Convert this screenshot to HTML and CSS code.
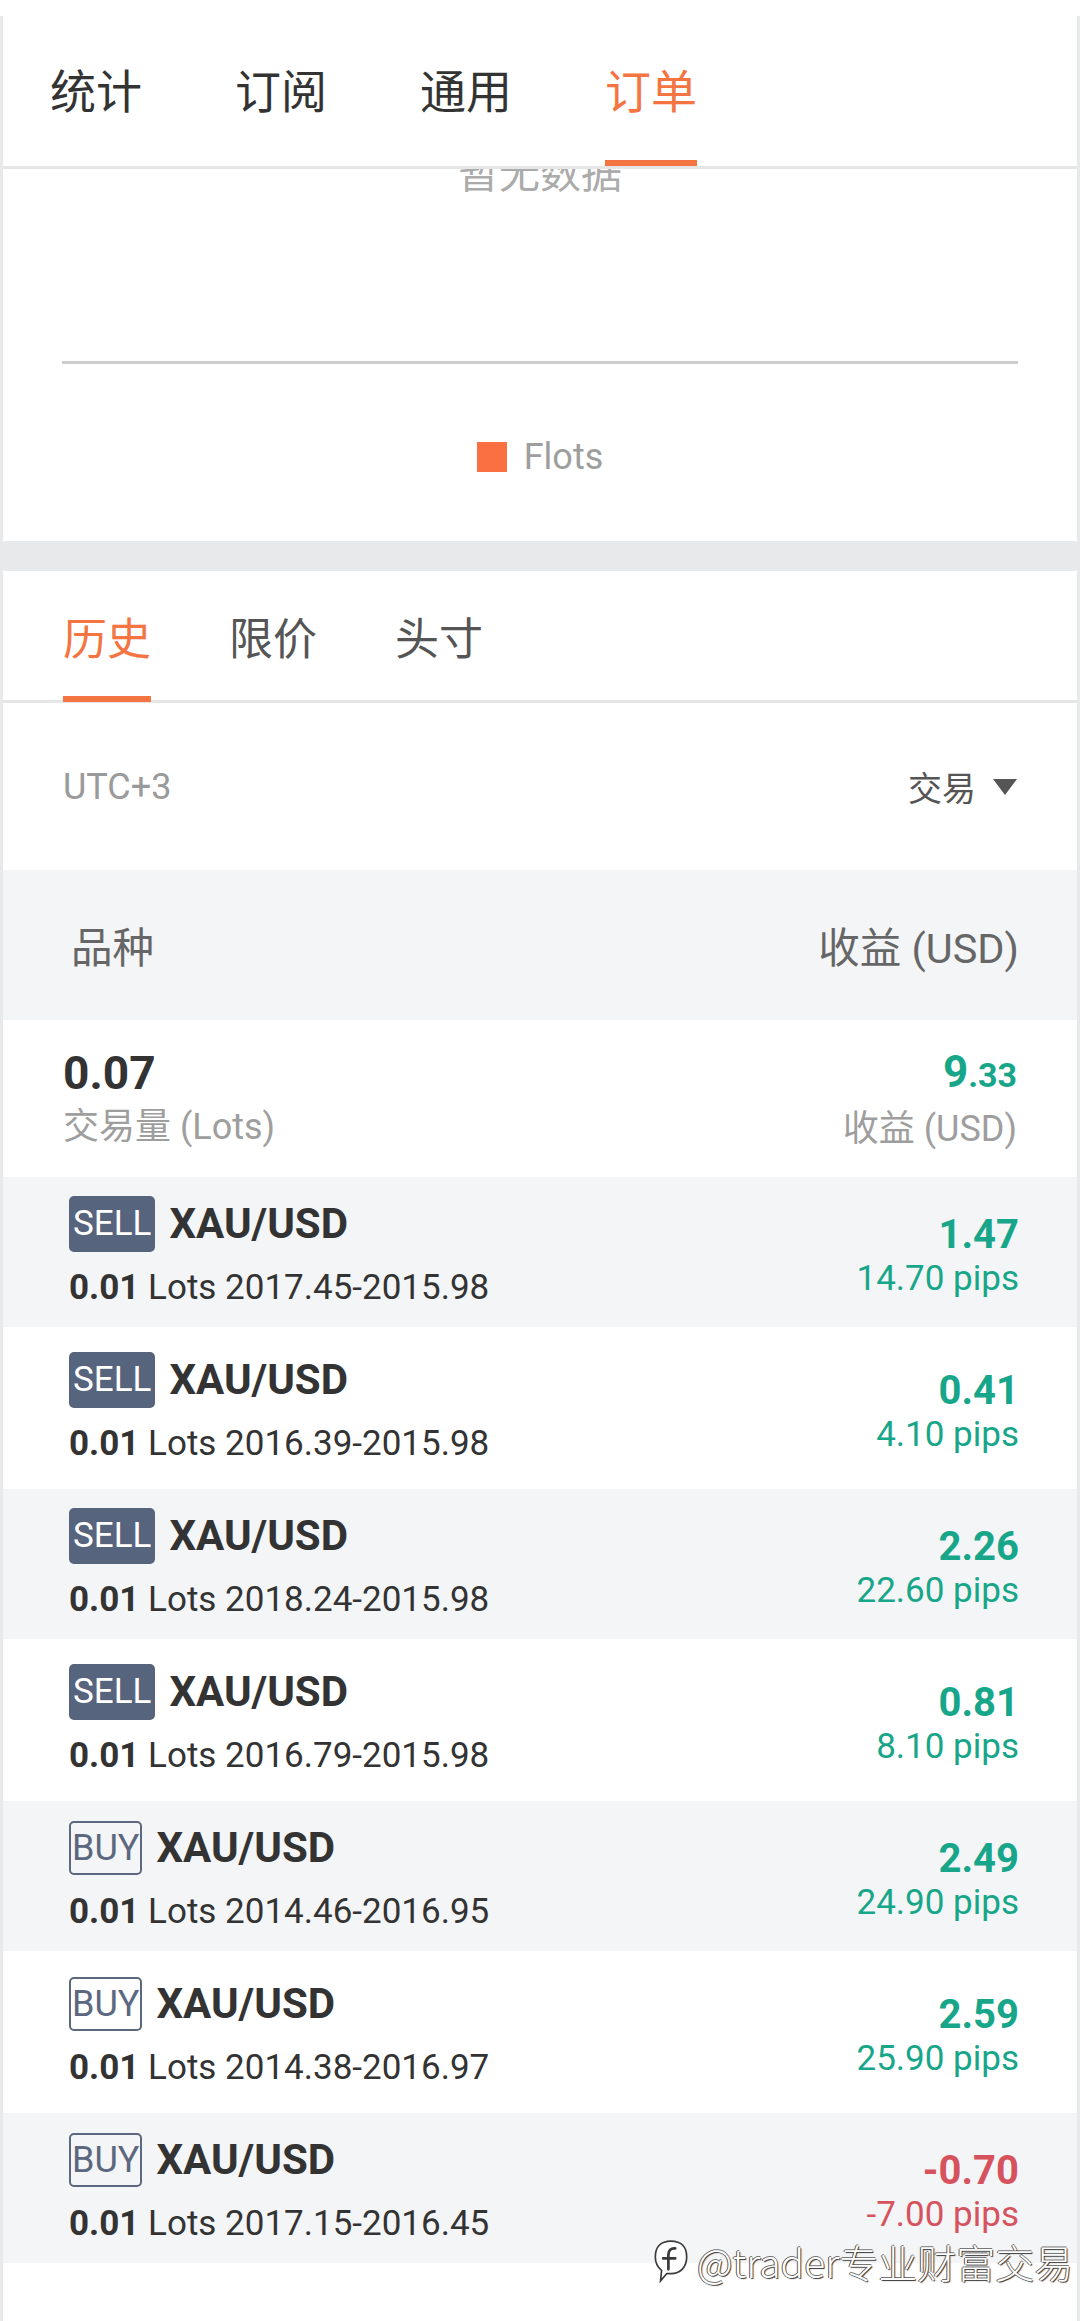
FILE: index.html
```html
<!DOCTYPE html>
<html lang="zh">
<head>
<meta charset="utf-8">
<title>订单</title>
<link rel="stylesheet" href="styles.css">
</head>
<body>
<div class="app">
  <div class="top-gap"></div>
  <div class="frame">
    <section class="card chart-card">
      <nav class="tabs main-tabs">
        <span class="tab">统计</span>
        <span class="tab">订阅</span>
        <span class="tab">通用</span>
        <span class="tab active">订单</span>
      </nav>
      <div class="chart">
        <div class="empty">暂无数据</div>
        <div class="axis"></div>
        <div class="legend"><span class="swatch"></span><span class="legend-label">Flots</span></div>
      </div>
    </section>

    <section class="card orders">
      <nav class="tabs sub-tabs">
        <span class="tab active">历史</span>
        <span class="tab">限价</span>
        <span class="tab">头寸</span>
      </nav>
      <div class="filter">
        <span class="tz">UTC+3</span>
        <span class="select">交易<i class="caret"></i></span>
      </div>
      <div class="head-row">
        <span>品种</span>
        <span>收益 (USD)</span>
      </div>
      <div class="summary">
        <div class="sum-left">
          <div class="big">0.07</div>
          <div class="label">交易量 (Lots)</div>
        </div>
        <div class="sum-right">
          <div class="pnl">9<small>.33</small></div>
          <div class="label">收益 (USD)</div>
        </div>
      </div>
      <ul class="trades">
        <li class="trade">
          <div class="t-left">
            <div class="t-top"><span class="badge sell">SELL</span><span class="sym">XAU/USD</span></div>
            <div class="t-bot"><b>0.01</b> Lots 2017.45-2015.98</div>
          </div>
          <div class="t-right up"><div class="pl">1.47</div><div class="pips">14.70 pips</div></div>
        </li>
        <li class="trade">
          <div class="t-left">
            <div class="t-top"><span class="badge sell">SELL</span><span class="sym">XAU/USD</span></div>
            <div class="t-bot"><b>0.01</b> Lots 2016.39-2015.98</div>
          </div>
          <div class="t-right up"><div class="pl">0.41</div><div class="pips">4.10 pips</div></div>
        </li>
        <li class="trade">
          <div class="t-left">
            <div class="t-top"><span class="badge sell">SELL</span><span class="sym">XAU/USD</span></div>
            <div class="t-bot"><b>0.01</b> Lots 2018.24-2015.98</div>
          </div>
          <div class="t-right up"><div class="pl">2.26</div><div class="pips">22.60 pips</div></div>
        </li>
        <li class="trade">
          <div class="t-left">
            <div class="t-top"><span class="badge sell">SELL</span><span class="sym">XAU/USD</span></div>
            <div class="t-bot"><b>0.01</b> Lots 2016.79-2015.98</div>
          </div>
          <div class="t-right up"><div class="pl">0.81</div><div class="pips">8.10 pips</div></div>
        </li>
        <li class="trade">
          <div class="t-left">
            <div class="t-top"><span class="badge buy">BUY</span><span class="sym">XAU/USD</span></div>
            <div class="t-bot"><b>0.01</b> Lots 2014.46-2016.95</div>
          </div>
          <div class="t-right up"><div class="pl">2.49</div><div class="pips">24.90 pips</div></div>
        </li>
        <li class="trade">
          <div class="t-left">
            <div class="t-top"><span class="badge buy">BUY</span><span class="sym">XAU/USD</span></div>
            <div class="t-bot"><b>0.01</b> Lots 2014.38-2016.97</div>
          </div>
          <div class="t-right up"><div class="pl">2.59</div><div class="pips">25.90 pips</div></div>
        </li>
        <li class="trade">
          <div class="t-left">
            <div class="t-top"><span class="badge buy">BUY</span><span class="sym">XAU/USD</span></div>
            <div class="t-bot"><b>0.01</b> Lots 2017.15-2016.45</div>
          </div>
          <div class="t-right down"><div class="pl">-0.70</div><div class="pips">-7.00 pips</div></div>
        </li>
      </ul>
      <div class="foot"></div>
    </section>
  </div>

  <div class="watermark">
    <svg class="wm-logo" width="36" height="46" viewBox="0 0 34 44" aria-hidden="true">
      <path d="M17 3 C27 3 32 9 32 18 C32 28 26 34 17 34 L13 34 L7 41 L8 31 C4 28 2 24 2 18 C2 9 7 3 17 3Z" fill="#fff" stroke="#3a3a3a" stroke-width="1.6"/>
      <path d="M21 10 C17 9.5 14.5 12 14.5 16 L14.5 30 M9.5 19.5 L21 19.5" stroke="#3a3a3a" stroke-width="2.6" fill="none" stroke-linecap="round"/>
    </svg>
    <span class="wm-text">@trader专业财富交易</span>
  </div>
</div>
</body>
</html>
```

FILE: styles.css
```css
* {
  box-sizing: border-box;
  margin: 0;
  padding: 0;
}

html, body {
  background: #fff;
}

body {
  width: 1080px;
  font-family: Roboto, "Noto Sans CJK SC", sans-serif;
  color: #333;
}

.app {
  position: relative;
  width: 1080px;
  min-height: 2321px;
  display: flex;
  flex-direction: column;
}

.top-gap {
  height: 16px;
  background: #fff;
}

.frame {
  flex: 1;
  display: flex;
  flex-direction: column;
  background: #e8e9eb;
  padding: 0 3px;
}

.card {
  background: #fff;
}

/* ---------- tabs ---------- */
.tabs {
  display: flex;
  border-bottom: 3px solid #e6e6e6;
  font-family: "Noto Sans CJK SC", sans-serif;
}

.tab {
  position: relative;
  display: flex;
  align-items: center;
}

.tab.active {
  color: #f47442;
}

.tab.active::after {
  content: "";
  position: absolute;
  left: 0;
  right: 0;
  bottom: 0;
  height: 6px;
  background: #f47442;
}

.main-tabs {
  height: 153px;
  padding-left: 47px;
  gap: 93px;
  font-size: 46px;
  color: #333;
}

.main-tabs .tab {
  padding-bottom: 7px;
}

.sub-tabs {
  height: 132px;
  padding-left: 60px;
  gap: 78px;
  font-size: 44px;
  color: #555;
}

.sub-tabs .tab.active::after {
  bottom: -2px;
}

/* ---------- chart ---------- */
.chart {
  height: 372px;
  overflow: hidden;
  display: flex;
  flex-direction: column;
}

.empty {
  margin-top: -19px;
  font-family: "Noto Sans CJK SC", sans-serif;
  font-size: 41px;
  line-height: 41px;
  text-align: center;
  color: #ababab;
}

.axis {
  margin: 170px 59px 0;
  height: 3px;
  background: #cdcdcd;
}

.legend {
  margin-top: 78px;
  height: 30px;
  display: flex;
  justify-content: center;
  align-items: center;
  gap: 17px;
}

.swatch {
  width: 30px;
  height: 30px;
  background: #fb7043;
}

.legend-label {
  font-size: 36px;
  line-height: 30px;
  color: #9e9e9e;
}

/* ---------- orders ---------- */
.orders {
  margin-top: 30px;
  flex: 1;
  display: flex;
  flex-direction: column;
}

.filter {
  height: 167px;
  padding: 0 60px;
  display: flex;
  justify-content: space-between;
  align-items: center;
}

.tz {
  font-size: 36px;
  color: #9a9a9a;
}

.select {
  display: flex;
  align-items: center;
  font-size: 34px;
  color: #555;
}

.caret {
  width: 0;
  height: 0;
  margin-left: 17px;
  border-left: 12.5px solid transparent;
  border-right: 12.5px solid transparent;
  border-top: 16px solid #555;
}

.head-row {
  height: 150px;
  padding: 0 58px 0 68px;
  background: #f4f5f7;
  display: flex;
  justify-content: space-between;
  align-items: center;
  font-size: 41.5px;
  color: #666;
}

.summary {
  height: 157px;
  padding: 0 60px;
  display: flex;
  justify-content: space-between;
  align-items: center;
}

.big {
  font-size: 46px;
  line-height: 50px;
  font-weight: 700;
  color: #333;
}

.label {
  margin-top: 7px;
  font-size: 36px;
  line-height: 44px;
  color: #9e9e9e;
}

.sum-right {
  text-align: right;
}

.pnl {
  font-size: 44px;
  line-height: 50px;
  font-weight: 700;
  color: #17a689;
}

.pnl small {
  font-size: 34px;
}

.trades {
  list-style: none;
}

.trade {
  height: 162px;
  padding: 0 58px 0 66px;
  display: flex;
  justify-content: space-between;
  align-items: center;
  background: #fff;
}

.trade:nth-child(odd) {
  height: 150px;
  background: #f4f5f7;
}

.t-top {
  height: 56px;
  display: flex;
  align-items: center;
  gap: 14px;
}

.badge {
  border-radius: 5px;
  font-weight: 400;
}

.badge.sell {
  height: 56px;
  line-height: 56px;
  padding: 0 4px;
  font-size: 35px;
  background: #56657d;
  color: #fff;
}

.badge.buy {
  height: 54px;
  line-height: 50px;
  padding: 0 1px;
  font-size: 36px;
  border: 2px solid #5b6880;
  color: #5b6880;
}

.sym {
  font-size: 42px;
  font-weight: 700;
  color: #333;
}

.t-bot {
  margin-top: 15px;
  font-size: 35px;
  line-height: 42px;
  color: #333;
}

.t-bot b {
  font-weight: 700;
}

.t-right {
  margin-top: 8px;
  text-align: right;
}

.pl {
  font-size: 40px;
  line-height: 46px;
  font-weight: 700;
}

.pips {
  font-size: 35px;
  line-height: 42px;
}

.t-right.up {
  color: #17a689;
}

.t-right.down {
  color: #d6535e;
}

.foot {
  flex: 1;
  background: #fff;
}

/* ---------- watermark ---------- */
.watermark {
  position: absolute;
  left: 653px;
  top: 2238px;
  display: flex;
  align-items: center;
  gap: 8px;
  pointer-events: none;
}

.wm-text {
  font-family: "Noto Sans CJK SC", sans-serif;
  font-size: 39px;
  line-height: 46px;
  font-weight: 300;
  color: #fff;
  text-shadow: -1px 0 0 #555, 1px 1px 1px #333, 0 -1px 0 #777;
}
```
